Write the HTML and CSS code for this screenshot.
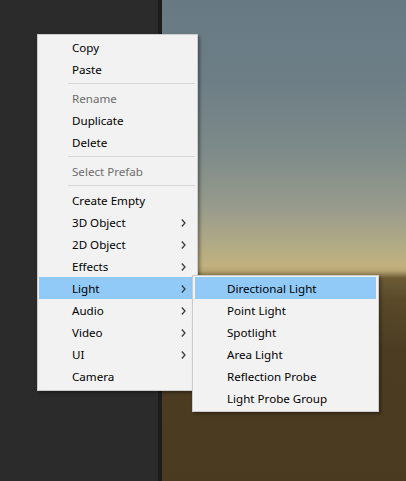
FILE: index.html
```html
<!DOCTYPE html>
<html>
<head>
<meta charset="utf-8">
<link rel="stylesheet" href="styles.css">
</head>
<body>
<div class="app">
  <div class="panel"></div>
  <div class="divider"></div>
  <div class="scene"></div>
</div>

<div class="menu main-menu">
  <div class="item">Copy</div>
  <div class="item">Paste</div>
  <div class="sep"></div>
  <div class="item disabled">Rename</div>
  <div class="item">Duplicate</div>
  <div class="item">Delete</div>
  <div class="sep"></div>
  <div class="item disabled">Select Prefab</div>
  <div class="sep"></div>
  <div class="item">Create Empty</div>
  <div class="item sub">3D Object<svg class="arrow" width="5" height="8" viewBox="0 0 5 8"><path d="M0.8 0.5 L4 4 L0.8 7.5" fill="none" stroke="#3a3a3a" stroke-width="1.3"/></svg></div>
  <div class="item sub">2D Object<svg class="arrow" width="5" height="8" viewBox="0 0 5 8"><path d="M0.8 0.5 L4 4 L0.8 7.5" fill="none" stroke="#3a3a3a" stroke-width="1.3"/></svg></div>
  <div class="item sub">Effects<svg class="arrow" width="5" height="8" viewBox="0 0 5 8"><path d="M0.8 0.5 L4 4 L0.8 7.5" fill="none" stroke="#3a3a3a" stroke-width="1.3"/></svg></div>
  <div class="item sub active">Light<svg class="arrow" width="5" height="8" viewBox="0 0 5 8"><path d="M0.8 0.5 L4 4 L0.8 7.5" fill="none" stroke="#3a3a3a" stroke-width="1.3"/></svg></div>
  <div class="item sub">Audio<svg class="arrow" width="5" height="8" viewBox="0 0 5 8"><path d="M0.8 0.5 L4 4 L0.8 7.5" fill="none" stroke="#3a3a3a" stroke-width="1.3"/></svg></div>
  <div class="item sub">Video<svg class="arrow" width="5" height="8" viewBox="0 0 5 8"><path d="M0.8 0.5 L4 4 L0.8 7.5" fill="none" stroke="#3a3a3a" stroke-width="1.3"/></svg></div>
  <div class="item sub">UI<svg class="arrow" width="5" height="8" viewBox="0 0 5 8"><path d="M0.8 0.5 L4 4 L0.8 7.5" fill="none" stroke="#3a3a3a" stroke-width="1.3"/></svg></div>
  <div class="item">Camera</div>
</div>

<div class="menu sub-menu">
  <div class="item active">Directional Light</div>
  <div class="item">Point Light</div>
  <div class="item">Spotlight</div>
  <div class="item">Area Light</div>
  <div class="item">Reflection Probe</div>
  <div class="item">Light Probe Group</div>
</div>
</body>
</html>
```

FILE: styles.css
```css
html, body {
  margin: 0;
  padding: 0;
  width: 406px;
  height: 481px;
  overflow: hidden;
}

body {
  position: relative;
  font-family: "Noto Sans", "Open Sans", sans-serif;
  font-size: 11.6px;
  color: #000;
}

.app {
  display: flex;
  width: 406px;
  height: 481px;
}

.panel {
  width: 158px;
  background: #2b2b2b;
}

.divider {
  width: 4px;
  background: #1c1c1c;
}

.scene {
  flex: 1;
  background: linear-gradient(to bottom,
    #677a84 0px,
    #6d7e86 80px,
    #7d8a89 150px,
    #969a8c 205px,
    #b1aa85 245px,
    #c2b17e 266px,
    #b5a472 271px,
    #6c5a34 278px,
    #5a4a2a 300px,
    #4c3c22 350px,
    #4a3a20 481px);
}

.menu {
  position: absolute;
  box-sizing: border-box;
  background: #f2f2f2;
  border: 1px solid #cccccc;
  box-shadow: 2px 2px 3px rgba(0, 0, 0, 0.35);
}

.main-menu {
  left: 37px;
  top: 34px;
  width: 161px;
  padding: 1px 2px 3px 1px;
}

.sub-menu {
  left: 192px;
  top: 275px;
  width: 187px;
  padding: 1px 2px 2px 2px;
}

.item {
  position: relative;
  height: 21px;
  padding-top: 1px;
  line-height: 22px;
  padding-left: 33px;
  white-space: nowrap;
}

.sub-menu .item {
  padding-left: 32px;
}

.item.active {
  background: #91c9f7;
}

.item.disabled {
  color: #6d6d6d;
}

.arrow {
  position: absolute;
  left: 142px;
  top: 8px;
}

.sep {
  height: 7px;
  margin-left: 29px;
  position: relative;
}

.sep::after {
  content: "";
  position: absolute;
  left: 0;
  right: 0;
  top: 3px;
  height: 1px;
  background: #d7d7d7;
}
```
